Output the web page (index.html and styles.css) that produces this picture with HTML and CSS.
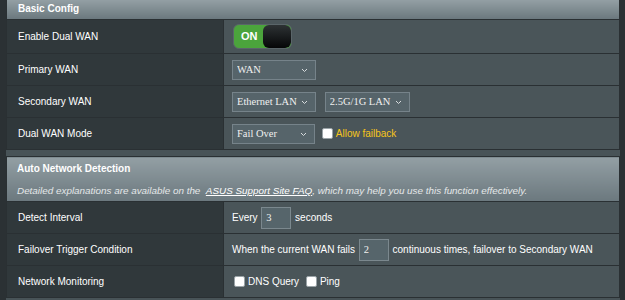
FILE: index.html
```html
<!DOCTYPE html>
<html lang="en">
<head>
    <meta charset="UTF-8">
    <title>Dual WAN</title>
    <link rel="stylesheet" href="styles.css">
</head>
<body>
    <div class="panel">
        <table class="form-table">
            <thead>
                <tr><td colspan="2" class="head">Basic Config</td></tr>
            </thead>
            <tbody>
                <tr class="first">
                    <th>Enable Dual WAN</th>
                    <td>
                        <div class="switch">
                            <span class="switch-on">ON</span>
                            <span class="switch-knob"></span>
                        </div>
                    </td>
                </tr>
                <tr>
                    <th>Primary WAN</th>
                    <td>
                        <span class="select-wrap w84">
                            <select><option>WAN</option></select>
                            <svg class="chev" width="7" height="5" viewBox="0 0 7 5"><path d="M1 1l2.5 2.5L6 1" fill="none" stroke="#d8dcde" stroke-width="1"/></svg>
                        </span>
                    </td>
                </tr>
                <tr>
                    <th>Secondary WAN</th>
                    <td>
                        <span class="select-wrap w84">
                            <select><option>Ethernet LAN</option></select>
                            <svg class="chev" width="7" height="5" viewBox="0 0 7 5"><path d="M1 1l2.5 2.5L6 1" fill="none" stroke="#d8dcde" stroke-width="1"/></svg>
                        </span>
                        <span class="select-wrap w85 gap">
                            <select><option>2.5G/1G LAN</option></select>
                            <svg class="chev" width="7" height="5" viewBox="0 0 7 5"><path d="M1 1l2.5 2.5L6 1" fill="none" stroke="#d8dcde" stroke-width="1"/></svg>
                        </span>
                    </td>
                </tr>
                <tr>
                    <th>Dual WAN Mode</th>
                    <td>
                        <span class="select-wrap w83">
                            <select><option>Fail Over</option></select>
                            <svg class="chev" width="7" height="5" viewBox="0 0 7 5"><path d="M1 1l2.5 2.5L6 1" fill="none" stroke="#d8dcde" stroke-width="1"/></svg>
                        </span>
                        <label class="check failback"><input type="checkbox"><span>Allow failback</span></label>
                    </td>
                </tr>
            </tbody>
        </table>

        <table class="form-table second">
            <thead>
                <tr>
                    <td colspan="2" class="head tall">
                        <div class="head-title">Auto Network Detection</div>
                        <div class="head-desc">Detailed explanations are available on the &nbsp;<a href="#">ASUS Support Site FAQ</a>, which may help you use this function effectively.</div>
                    </td>
                </tr>
            </thead>
            <tbody>
                <tr>
                    <th>Detect Interval</th>
                    <td>Every <input class="num" type="text" value="3"> seconds</td>
                </tr>
                <tr>
                    <th>Failover Trigger Condition</th>
                    <td>When the current WAN fails <input class="num" type="text" value="2"> continuous times, failover to Secondary WAN</td>
                </tr>
                <tr>
                    <th>Network Monitoring</th>
                    <td>
                        <label class="check"><input type="checkbox"><span>DNS Query</span></label>
                        <label class="check"><input type="checkbox"><span>Ping</span></label>
                    </td>
                </tr>
            </tbody>
        </table>
    </div>
</body>
</html>
```

FILE: styles.css
```css
body {
    margin: 0;
    background-color: #2b3134;
    font-family: "Liberation Sans", Arial, sans-serif;
    font-size: 10px;
    color: #ffffff;
    height: 300px;
    overflow: hidden;
}
.panel {
    margin: 0 5px 0 6px;
    background-color: #485357;
    height: 300px;
}
.form-table {
    width: 100%;
    border-collapse: collapse;
    border: 1px solid #2a3033;
    border-top: none;
}
.form-table.second {
    margin-top: 6px;
    border-top: 1px solid #2a3033;
}
.form-table td {
    padding: 0 8px;
    background-color: #4a5559;
    border-bottom: 1px solid #2a3033;
}
.form-table .head {
    background: linear-gradient(#939fa4, #6b787e);
    font-weight: bold;
    font-size: 10px;
    line-height: 15px;
    padding: 1px 11px 3px 11px;
    border-bottom: 1px solid #2a3033;
}
.form-table .head.tall {
    padding: 4px 10px 2px 10px;
}
.head-title {
    line-height: 16px;
}
.head-desc {
    margin-top: 6px;
    line-height: 16px;
    font-weight: normal;
    font-style: italic;
    font-size: 9.9px;
    color: #e4e7e8;
}
.head-desc a {
    color: #ffffff;
    text-decoration: underline;
}
.form-table th {
    width: 195px;
    height: 31px;
    padding: 0 10px 0 11px;
    text-align: left;
    font-weight: normal;
    background-color: #30383b;
    border-bottom: 1px solid #2a3033;
    border-right: 1px solid #2a3033;
}
.form-table tbody td {
    height: 31px;
}
.form-table tr.first th,
.form-table tr.first td {
    height: 33px;
}
.switch {
    display: flex;
    width: 57px;
    height: 23px;
    border: 1px solid #5a6569;
    border-radius: 6px;
    background-color: #4ba43c;
    margin-left: 1px;
    overflow: hidden;
}
.switch-on {
    width: 22px;
    padding-left: 7px;
    line-height: 23px;
    font-weight: bold;
    font-size: 11px;
    color: #ffffff;
}
.switch-knob {
    flex: 1;
    border-radius: 6px;
    background: linear-gradient(#2d3234, #050607);
}
.select-wrap {
    position: relative;
    display: inline-block;
    vertical-align: middle;
}
.select-wrap.gap {
    margin-left: 6px;
}
.select-wrap select {
    appearance: none;
    -webkit-appearance: none;
    height: 20px;
    padding: 0 0 0 4px;
    background-color: #56646a;
    border: 1px solid #76838a;
    color: #f0f0f0;
    font-family: "Liberation Serif", "Times New Roman", serif;
    font-size: 10.5px;
    border-radius: 0;
}
.w84 select { width: 84px; }
.w85 select { width: 85px; }
.w83 select { width: 83px; }
.chev {
    position: absolute;
    right: 8px;
    top: 8px;
}
.check {
    display: inline-flex;
    align-items: center;
    vertical-align: middle;
    margin-left: 2px;
    margin-right: 2px;
}
.check input {
    appearance: none;
    -webkit-appearance: none;
    width: 11px;
    height: 11px;
    margin: 0 3px 0 0;
    background-color: #ffffff;
    border: 1px solid #9aa3a7;
    border-radius: 2px;
}
.failback {
    margin-left: 4px;
    color: #f6c61a;
}
.num {
    width: 30px;
    height: 22px;
    box-sizing: border-box;
    margin: 0 1px;
    padding: 0 4px;
    vertical-align: middle;
    background-color: #56656b;
    border: 1px solid #7b888e;
    color: #f0f0f0;
    font-family: "Liberation Serif", "Times New Roman", serif;
    font-size: 10.5px;
}
```
